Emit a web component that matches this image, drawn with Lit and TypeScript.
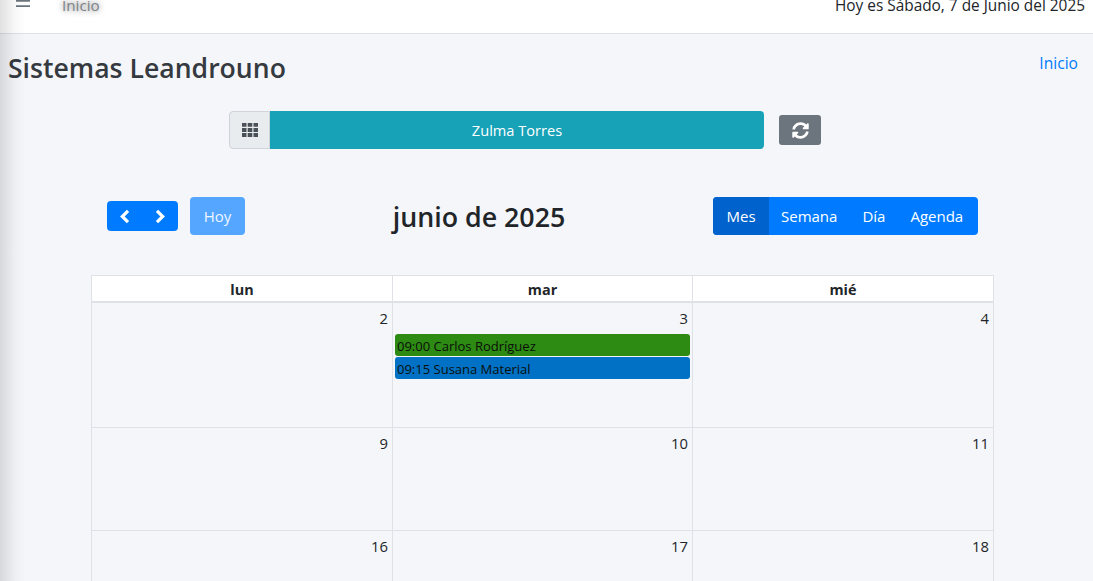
import { LitElement, html, css } from "lit";
import { customElement } from "lit/decorators.js";

@customElement("app-root")
export class AppRoot extends LitElement {
  static styles = css`
    :host { display: block; width: 1093px; height: 581px; overflow: hidden; background: #f4f6f9; font-family: "Open Sans", "Noto Sans", sans-serif; color: #212529; position: relative; }
    * { box-sizing: border-box; }
    .shade { position: absolute; left: 0; top: 0; bottom: 0; width: 26px; background: linear-gradient(to right, rgba(0,0,0,.12), rgba(0,0,0,.03) 55%, rgba(0,0,0,0)); pointer-events: none; }
    .nav { height: 34px; background: #fff; border-bottom: 1px solid #dee2e6; display: flex; align-items: flex-start; justify-content: space-between; padding: 0 8px 0 16px; }
    .nav-left { display: flex; align-items: center; gap: 32px; height: 32px; margin-top: -11px; }
    .burger { width: 14px; height: 14px; color: #6c757d; display: block; }
    .home { font-size: 15.2px; color: #7d8389; text-shadow: 0 0 6px rgba(0,0,0,.6); }
    .today { font-size: 15.4px; height: 32px; margin-top: -10px; line-height: 32px; }
    .head { display: flex; justify-content: space-between; padding: 15px 15px 0 8px; height: 77px; }
    h1 { margin: 0; font-size: 26.6px; font-weight: 600; color: #343a40; line-height: 38px; }
    .crumb { color: #007bff; font-size: 15.6px; line-height: 28px; }
    .selector { display: flex; height: 38px; margin-left: 229px; gap: 15px; }
    .group { display: flex; width: 535px; }
    .addon { width: 41px; background: #e9ecef; border: 1px solid #ced4da; border-radius: 4px 0 0 4px; display: flex; align-items: center; justify-content: center; }
    .name { flex: 1; background: #17a2b8; color: #fff; font-size: 14.6px; display: flex; align-items: center; justify-content: center; border-radius: 0 4px 4px 0; }
    .refresh { width: 42px; height: 30px; margin-top: 4px; background: #6c757d; border-radius: 3px; display: flex; align-items: center; justify-content: center; }
    .toolbar { display: flex; justify-content: space-between; align-items: center; margin: 48px 115px 0 107px; height: 38px; }
    .left { display: flex; gap: 12px; align-items: center; }
    .nav-btns { display: flex; width: 71px; height: 30px; background: #007bff; border-radius: 4px; }
    .nav-btns span { flex: 1; display: flex; align-items: center; justify-content: center; }
    .hoy { width: 55px; height: 38px; background: #55a6ff; color: #eef6ff; border-radius: 4px; font-size: 15px; display: flex; align-items: center; justify-content: center; }
    h2 { margin: 0; font-size: 26.8px; font-weight: 600; color: #212529; }
    .views { display: flex; background: #007bff; border-radius: 4px; height: 38px; width: 265px; color: #fff; font-size: 15px; }
    .views span { padding: 0 13px 0 12px; display: flex; align-items: center; }
    .views .on { background: #0062cc; border-radius: 4px 0 0 4px; width: 56px; padding: 0; justify-content: center; }
    .cal { margin: 40px 0 0 91px; width: 903px; background: #fff; }
    .row { display: grid; grid-template-columns: 300px 300px 301px; border-left: 1px solid #dee2e6; border-right: 1px solid #dee2e6; }
    .hdr { border-top: 1px solid #dee2e6; height: 28px; border-bottom: 2px solid #dee2e6; font-weight: 700; font-size: 14.4px; line-height: 27px; text-align: center; background: #fff; }
    .hdr > div + div, .week > div + div { border-left: 1px solid #dee2e6; }
    .week { background: #f4f6f9; border-bottom: 1px solid #dee2e6; font-size: 14.8px; }
    .week > div { padding: 5px 2px 0 2px; text-align: right; color: #212529; }
    .h1 { height: 125px; } .h2 { height: 103px; } .h3 { height: 60px; }
    .num { line-height: 20px; padding-right: 2px; }
    .ev { height: 22px; border-radius: 3px; text-align: left; font-size: 13px; line-height: 24px; padding-left: 2px; color: #0a0f0a; margin-bottom: 1px; }
    .ev.g { background: #2d8a13; margin-top: 6px; }
    .ev.b { background: #0071c5; margin-top: 1px; }
  `;

  render() {
    return html`
      <div class="nav">
        <div class="nav-left">
          <svg class="burger" viewBox="0 0 14 14"><path d="M0 2h14v1.800H0zM0 7.300h14v1.800H0z" fill="currentColor"/></svg>
          <span class="home">Inicio</span>
        </div>
        <div class="today">Hoy es Sábado, 7 de Junio del 2025</div>
      </div>
      <div class="head"><h1>Sistemas Leandrouno</h1><a class="crumb">Inicio</a></div>
      <div class="selector">
        <div class="group">
          <div class="addon"><svg width="16" height="14" viewBox="0 0 16 14" fill="#495057"><path d="M0 0h4.500v3.800H0zM5.700 0h4.600v3.800H5.700zM11.500 0H16v3.800h-4.500zM0 5h4.500v3.900H0zM5.700 5h4.600v3.900H5.700zM11.500 5H16v3.900h-4.500zM0 10.100h4.500V14H0zM5.700 10.100h4.600V14H5.700zM11.500 10.100H16V14h-4.500z"/></svg></div>
          <div class="name">Zulma Torres</div>
        </div>
        <div class="refresh"><svg width="17" height="17" viewBox="0 0 512 512" fill="#fff"><path d="M370.700 133.300C339.500 104 298.900 88 255.800 88c-77.500.1-144.300 53.200-162.800 126.900-1.300 5.400-6.100 9.200-11.700 9.200H24.100c-7.500 0-13.200-6.800-11.800-14.200C33.900 94.900 134.800 8 256 8c66.500 0 126.800 26.100 171.300 68.700L463 41c15.100-15.100 41-4.400 41 17v134c0 13.300-10.700 24-24 24H345.900c-21.400 0-32.100-25.900-17-41l41.800-41.700zM32 296h134.100c21.400 0 32.100 25.900 17 41l-41.800 41.800c31.300 29.300 71.800 45.300 114.900 45.200 77.400-.1 144.300-53.100 162.800-126.800 1.300-5.400 6.100-9.200 11.700-9.200h57.300c7.500 0 13.200 6.800 11.800 14.200C478.100 417.100 377.200 504 256 504c-66.500 0-126.800-26.100-171.300-68.700L49 471c-15.100 15.100-41 4.400-41-17V320c0-13.300 10.700-24 24-24z"/></svg></div>
      </div>
      <div class="toolbar">
        <div class="left">
          <div class="nav-btns">
            <span><svg width="11" height="15" viewBox="0 0 11 15" fill="none" stroke="#fff" stroke-width="3.200"><path d="M9 1.800 3.300 7.500 9 13.200"/></svg></span>
            <span><svg width="11" height="15" viewBox="0 0 11 15" fill="none" stroke="#fff" stroke-width="3.200"><path d="M2 1.800 7.700 7.500 2 13.200"/></svg></span>
          </div>
          <div class="hoy">Hoy</div>
        </div>
        <h2>junio de 2025</h2>
        <div class="views"><span class="on">Mes</span><span>Semana</span><span>Día</span><span>Agenda</span></div>
      </div>
      <div class="cal">
        <div class="row hdr"><div>lun</div><div>mar</div><div>mié</div></div>
        <div class="row week h1">
          <div><div class="num">2</div></div>
          <div><div class="num">3</div><div class="ev g">09:00 Carlos Rodríguez</div><div class="ev b">09:15 Susana Material</div></div>
          <div><div class="num">4</div></div>
        </div>
        <div class="row week h2"><div><div class="num">9</div></div><div><div class="num">10</div></div><div><div class="num">11</div></div></div>
        <div class="row week h3"><div><div class="num">16</div></div><div><div class="num">17</div></div><div><div class="num">18</div></div></div>
      </div>
      <div class="shade"></div>
    `;
  }
}
